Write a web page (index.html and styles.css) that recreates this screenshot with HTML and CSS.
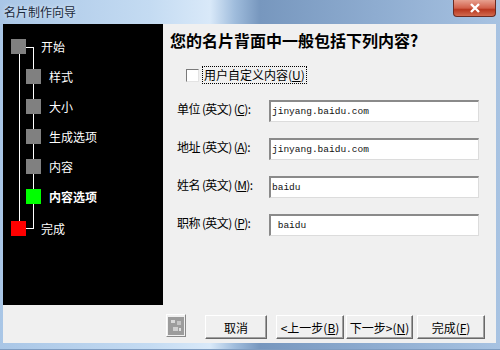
FILE: index.html
```html
<!DOCTYPE html>
<html lang="zh-CN">
<head>
    <meta charset="UTF-8" />
    <title>名片制作向导</title>
    <link rel="stylesheet" href="styles.css">
</head>
<body>
    <div class="window">
        <div class="titlebar">
            <span class="title">名片制作向导</span>
            <span class="close">
                <svg width="12" height="10" viewBox="0 0 12 10"><path d="M2 1 L10 9 M10 1 L2 9" stroke="#fff" stroke-width="2.4"/></svg>
            </span>
        </div>

        <div class="client">
            <!-- Schritte links -->
            <div class="steps">
                <span class="line outer"></span>
                <span class="line inner"></span>
                <span class="line hook top"></span>
                <span class="line hook bottom"></span>

                <div class="step root"><span class="box"></span>开始</div>
                <div class="step"><span class="box"></span>样式</div>
                <div class="step"><span class="box"></span>大小</div>
                <div class="step"><span class="box"></span>生成选项</div>
                <div class="step"><span class="box"></span>内容</div>
                <div class="step current"><span class="box green"></span>内容选项</div>
                <div class="step root last"><span class="box red"></span>完成</div>
            </div>

            <div class="page">
                <h2>您的名片背面中一般包括下列内容?</h2>
                <div class="check">
                    <span class="checkbox"></span>
                    <span class="focus">用户自定义内容(<u>U</u>)</span>
                </div>
                <div class="fields">
                    <div class="field">
                        <label>单位 (英文) (<u>C</u>):</label>
                        <input type="text" value="jinyang.baidu.com" />
                    </div>
                    <div class="field">
                        <label>地址 (英文) (<u>A</u>):</label>
                        <input type="text" value="jinyang.baidu.com" />
                    </div>
                    <div class="field">
                        <label>姓名 (英文) (<u>M</u>):</label>
                        <input type="text" value="baidu" />
                    </div>
                    <div class="field">
                        <label>职称 (英文) (<u>P</u>):</label>
                        <input type="text" value=" baidu" />
                    </div>
                </div>
            </div>

            <div class="buttons">
                <span class="help">
                    <svg width="16" height="18" viewBox="0 0 16 18">
                        <rect width="16" height="18" fill="#9c9c9c"/>
                        <rect x="3" y="3" width="4" height="3" fill="#d8d8d8"/>
                        <rect x="9" y="4" width="4" height="4" fill="#c4c4c4"/>
                        <rect x="5" y="10" width="5" height="4" fill="#cfcfcf"/>
                        <rect x="11" y="11" width="2" height="3" fill="#e0e0e0"/>
                    </svg>
                </span>
                <button class="btn cancel">取消</button>
                <button class="btn back">&lt;上一步(<u>B</u>)</button>
                <button class="btn next">下一步&gt;(<u>N</u>)</button>
                <button class="btn finish">完成(<u>F</u>)</button>
            </div>
        </div>
    </div>
</body>
</html>
```

FILE: styles.css
```css
body {
    margin: 0;
    font-family: "Noto Sans CJK SC", "DejaVu Sans", sans-serif;
    font-size: 12px;
}

.window {
    width: 500px;
    height: 350px;
    display: flex;
    flex-direction: column;
    padding: 0 4px 6px 3px;
    box-sizing: border-box;
    background: linear-gradient(90deg, #a9c6e6 0%, #c4dbf2 30%, #d9e9f9 42%, #9fbcdc 47%, #7797be 52%, #8eacd0 75%, #a8c3e2 100%);
    border-bottom: 1px solid #7f9cc0;
}

.titlebar {
    height: 24px;
    display: flex;
    justify-content: space-between;
    align-items: flex-start;
}

.title {
    margin: 4px 0 0 1px;
    line-height: 15px;
    color: #1b2a3c;
    text-shadow: 0 0 4px #e8f2fc;
}

.close {
    width: 43px;
    height: 17px;
    box-sizing: border-box;
    border: 1px solid #6b2b22;
    border-top: none;
    border-radius: 0 0 4px 4px;
    background: linear-gradient(#e7a08f, #d2604a 50%, #b8371f 60%, #d26a4f);
    display: flex;
    align-items: center;
    justify-content: center;
}

.client {
    flex: 1;
    display: grid;
    grid-template-columns: 160px 1fr;
    grid-template-rows: 281px 1fr;
    background: #f0f0f0;
}

/* Schritte */
.steps {
    background: #000;
    color: #fff;
    position: relative;
    padding-top: 15px;
    display: flex;
    flex-direction: column;
    gap: 15px;
}

.line {
    position: absolute;
    background: #fff;
}

.line.outer {
    left: 16px;
    top: 30px;
    width: 1px;
    height: 167px;
}

.line.inner {
    left: 30px;
    top: 23px;
    width: 1px;
    height: 181px;
}

.line.hook {
    left: 23px;
    width: 8px;
    height: 1px;
}

.line.hook.top {
    top: 23px;
}

.line.hook.bottom {
    top: 204px;
}

.step {
    display: flex;
    align-items: center;
    height: 15px;
    line-height: 15px;
    padding-left: 23px;
    position: relative;
}

.step .box {
    width: 15px;
    height: 15px;
    background: #808080;
    margin-right: 8px;
}

.step.root {
    padding-left: 8px;
}

.step.root .box {
    margin-right: 15px;
}

.step.last {
    margin-top: 2px;
}

.step.current {
    font-weight: bold;
}

.box.green {
    background: #00ff00;
}

.box.red {
    background: #ff0000;
}

/* Inhalt rechts */
.page {
    color: #000;
}

.page h2 {
    margin: 0;
    padding: 5px 0 0 7px;
    font-size: 16px;
    line-height: 22px;
    font-weight: bold;
}

.check {
    display: flex;
    align-items: center;
    margin-top: 15px;
    padding-left: 23px;
}

.checkbox {
    width: 11px;
    height: 11px;
    background: #fff;
    border-top: 1px solid #7a7a7a;
    border-left: 1px solid #7a7a7a;
    border-right: 1px solid #e3e3e3;
    border-bottom: 1px solid #e3e3e3;
    margin-right: 3px;
}

.focus {
    border: 1px dotted #000;
    padding: 0 1px;
    line-height: 16px;
}

.fields {
    display: flex;
    flex-direction: column;
    gap: 16px;
    margin-top: 16px;
    padding-left: 14px;
}

.field {
    display: flex;
    align-items: center;
}

.field label {
    width: 92px;
    padding-bottom: 5px;
    white-space: nowrap;
    letter-spacing: -0.6px;
}

.field input {
    width: 210px;
    height: 22px;
    box-sizing: border-box;
    margin: 0;
    padding: 0 0 0 1px;
    border-top: 2px solid #8a8a8a;
    border-left: 2px solid #8a8a8a;
    border-right: 1px solid #dcdcdc;
    border-bottom: 1px solid #dcdcdc;
    background: #fff;
    font-family: "Liberation Mono", monospace;
    font-size: 9.5px;
    color: #111;
    white-space: pre;
}

/* Knöpfe unten */
.buttons {
    grid-column: 1 / 3;
    display: flex;
    align-items: flex-start;
    padding: 9px 0 0 163px;
}

.help {
    width: 20px;
    height: 23px;
    box-sizing: border-box;
    display: flex;
    align-items: center;
    justify-content: center;
    border-top: 1px solid #fff;
    border-left: 1px solid #fff;
    border-right: 1px solid #8a8a8a;
    border-bottom: 1px solid #8a8a8a;
    margin-right: 19px;
}

.btn {
    height: 24px;
    margin-top: 1px;
    padding: 0;
    font-family: inherit;
    font-size: 12px;
    background: #f0f0f0;
    color: #000;
    border-top: 1px solid #fff;
    border-left: 1px solid #fff;
    border-right: 1px solid #696969;
    border-bottom: 1px solid #696969;
    box-shadow: inset -1px -1px #a0a0a0;
}

.btn.cancel {
    width: 62px;
    margin-right: 9px;
}

.btn.back {
    width: 68px;
    margin-right: 2px;
}

.btn.next {
    width: 67px;
    margin-right: 4px;
}

.btn.finish {
    width: 68px;
}
```
